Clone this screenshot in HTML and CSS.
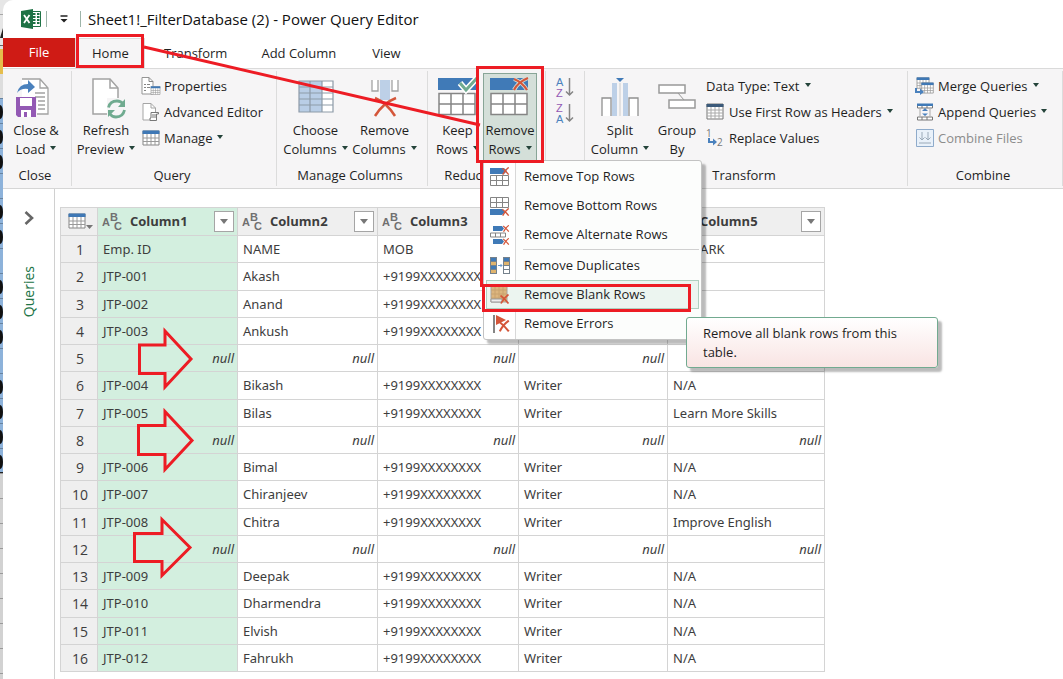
FILE: index.html
```html
<!DOCTYPE html>
<html lang="en">
<head>
<meta charset="utf-8">
<title>Sheet1!_FilterDatabase (2) - Power Query Editor</title>
<link rel="stylesheet" href="styles.css">
</head>
<body>
<svg class="defs" aria-hidden="true">
  <defs>
    <symbol id="x" viewBox="0 0 10 10"><path d="M1 1.500 Q5 4.500 9 9.500 M9 0.500 Q4 4 1.500 9.500" fill="none" stroke="#d4563a" stroke-width="1.700"/></symbol>
    <symbol id="grid" viewBox="0 0 38 24"><path d="M1 1.500H37V22.500H1Z" fill="#fff" stroke="#858585" stroke-width="1.500"/><path d="M1 12H37M13 1V23M25 1V23" stroke="#858585" stroke-width="1.500"/></symbol>
    <symbol id="table" viewBox="0 0 18 16"><path d="M1 1H17V15H1Z" fill="#fff" stroke="#858585"/><path d="M1 8H17M1 11.500H17M5 4V15M9 4V15M13 4V15" stroke="#9a9a9a"/><path d="M0.500 0.500H17.500V4H0.500Z" fill="#3f78b5"/></symbol>
    <symbol id="page" viewBox="0 0 28 38"><path d="M1 1H19L27 10V37H1Z" fill="#fff" stroke="#a3a3a3" stroke-width="1.500"/><path d="M19 1V10H27" fill="none" stroke="#a3a3a3" stroke-width="1.500"/></symbol>
    <symbol id="abc" viewBox="0 0 21 20"><text x="0" y="14">A</text><text x="8" y="9">B</text><text x="12" y="18">C</text></symbol>
  </defs>
</svg>
<div class="desktop">
  <div class="behind" aria-hidden="true">
    <svg width="12" height="679" viewBox="0 0 12 679"><path d="M0 38L3 28V38Z" fill="#222"/><path d="M0 105a3 7 0 0 1 0 14ZM0 130a3 7 0 0 1 0 14ZM0 155a3 7 0 0 1 0 14ZM0 205a3 7 0 0 1 0 14ZM0 230a3 7 0 0 1 0 14ZM0 280a3 7 0 0 1 0 14ZM0 305a3 7 0 0 1 0 14ZM0 330a3 7 0 0 1 0 14ZM0 380a3 7 0 0 1 0 14ZM0 405a3 7 0 0 1 0 14ZM0 430a3 7 0 0 1 0 14ZM0 455a3 7 0 0 1 0 14Z" fill="#111"/></svg>
  </div>
  <main class="window">
    <header class="titlebar">
      <svg class="excel" width="20" height="20" viewBox="0 0 20 20"><path d="M10 2.500H19.500V17.500H10Z" fill="#fff" stroke="#1e7245"/><path d="M12 5H14.500M16 5H18.500M12 8H14.500M16 8H18.500M12 11H14.500M16 11H18.500M12 14H14.500M16 14H18.500" stroke="#1e7245" stroke-width="1.800"/><path d="M0 2L12 0V20L0 18Z" fill="#1e7245"/><path d="M3 6L8.500 14M8.500 6L3 14" stroke="#fff" stroke-width="1.800"/></svg>
      <span class="rule"></span>
      <button class="quick" aria-label="Customize Quick Access Toolbar"><svg width="8" height="8" viewBox="0 0 8 8"><path d="M0.500 1H7.500" stroke="#222" stroke-width="1.500"/><path d="M0.500 4H7.500L4 7.500Z" fill="#222"/></svg></button>
      <span class="rule"></span>
      <h1>Sheet1!_FilterDatabase (2) - Power Query Editor</h1>
    </header>
    <nav class="tabs">
      <button class="tab file">File</button>
      <button class="tab home">Home</button>
      <button class="tab transform">Transform</button>
      <button class="tab add">Add Column</button>
      <button class="tab view">View</button>
    </nav>
    <section class="ribbon">
      <div class="group g-close">
        <div class="tools">
          <button class="big">
            <svg width="40" height="40" viewBox="0 0 40 40"><path d="M6 1H24L32 10V36H21V20H6Z" fill="#fff"/><path d="M6 1H24L32 10V36H21M24 1V10H32M19 15H29M19 19H29M22 23H29M22 27H29M22 31H29" fill="none" stroke="#a3a3a3" stroke-width="1.300"/><path d="M1 15Q3 6 12 6V2L19 9L12 15V11Q5 10 1 15Z" fill="#4a81bd"/><path d="M0 19H20V39H2L0 37Z" fill="#9359b4"/><path d="M4 20H16V28H4Z" fill="#fff"/><path d="M5 32H15V39H5Z" fill="#fff"/><path d="M8 34H11V39H8Z" fill="#9359b4"/></svg>
            <span>Close &amp;</span><span class="drop">Load</span>
          </button>
        </div>
        <h2>Close</h2>
      </div>
      <div class="group g-query">
        <div class="tools">
          <button class="big">
            <svg width="36" height="40" viewBox="-4 0 36 40"><path d="M1 1H18L26 10V36H1Z" fill="#fff" stroke="#a3a3a3" stroke-width="1.500"/><path d="M18 1V10H26" fill="none" stroke="#a3a3a3" stroke-width="1.500"/><path d="M15 20H32V40H15Z" fill="#f6f5f6"/><path d="M16.500 28.500Q18 22 25 22Q29 22 31 25M32.500 31Q31 38 24 38Q20 38 18 35" transform="translate(0 1)" fill="none" stroke="#70ab90" stroke-width="2.800"/><path d="M33 21V29H26ZM16 39V32H23Z" fill="#70ab90"/></svg>
            <span>Refresh</span><span class="drop">Preview</span>
          </button>
          <div class="stack">
            <button class="small"><svg width="20" height="18" viewBox="0 0 20 18"><path d="M1 0.500H8L12 4.500V17H1Z" fill="#fff" stroke="#959595"/><path d="M8 0.500V4.500H12M3 7.500H5M6 7.500H9M3 10.500H5M6 10.500H9M3 13.500H5" fill="none" stroke="#858585"/><use href="#table" x="9" y="9" width="11" height="9"/></svg>Properties</button>
            <button class="small"><svg width="20" height="18" viewBox="0 0 20 18"><path d="M2 0.500H10L14.500 5V17H2Z" fill="#fff" stroke="#a5a5a5"/><path d="M10 0.500V5H14.500" fill="none" stroke="#a5a5a5"/><path d="M10 9.500H17.500V11H15.500V17.500H9V15H10Z" fill="#fff" stroke="#777"/><path d="M11 12H15M11 14H15" stroke="#777"/></svg>Advanced Editor</button>
            <button class="small"><svg width="20" height="18" viewBox="0 0 20 18"><use href="#table" x="1" y="1" width="18" height="16"/></svg><span class="drop">Manage</span></button>
          </div>
        </div>
        <h2>Query</h2>
      </div>
      <div class="group g-columns">
        <div class="tools">
          <button class="big">
            <svg width="36" height="40" viewBox="0 0 36 40"><path d="M1 3H35V34H1Z" fill="#fff"/><path d="M1 3H24V34H1Z" fill="#b9cee6"/><path d="M1 3H35V34H1ZM12 3V34M24 3V34M1 9H35M1 15H35M1 21H35M1 27H35" fill="none" stroke="#8e9ba8" stroke-width="1.200"/></svg>
            <span>Choose</span><span class="drop">Columns</span>
          </button>
          <button class="big">
            <svg width="36" height="40" viewBox="0 0 36 40"><path d="M5 2V13H11V2M31 2V13H25V2" fill="#fff" stroke="#a3a3a3" stroke-width="1.300"/><path d="M13 2H23V22H13Z" fill="#bdd0e7"/><path d="M8 20Q20 25 28 38M29 20Q16 25 8 38" fill="none" stroke="#d4563a" stroke-width="2.500"/></svg>
            <span>Remove</span><span class="drop">Columns</span>
          </button>
        </div>
        <h2>Manage Columns</h2>
      </div>
      <div class="group g-reduce">
        <div class="tools">
          <button class="big keep">
            <svg width="40" height="40" viewBox="0 0 40 40"><path d="M0 0H38V12H0Z" fill="#407ab7"/><use href="#grid" x="0" y="14" width="38" height="24"/><path d="M22 5L28 12L39 0" fill="none" stroke="#fff" stroke-width="6"/><path d="M22 5L28 12L39 0" fill="none" stroke="#70ab90" stroke-width="3"/></svg>
            <span>Keep</span><span class="drop">Rows</span>
          </button>
          <div class="anchor">
            <button class="big pressed" aria-expanded="true">
              <svg width="40" height="40" viewBox="0 0 40 40"><path d="M0 0H38V12H0Z" fill="#407ab7"/><use href="#grid" x="0" y="14" width="38" height="24"/><path d="M24 1Q32 4 37 12M38 0Q28 4 24 12" fill="none" stroke="#d4dfd9" stroke-width="4"/><path d="M24 1Q32 4 37 12M38 0Q28 4 24 12" fill="none" stroke="#d4563a" stroke-width="2.200"/></svg>
              <span>Remove</span><span class="drop">Rows</span>
            </button>
            <div class="menu">
              <button><svg width="20" height="20" viewBox="0 0 20 20"><path d="M0 1H14L17 4L14 7H0Z" fill="#407ab7"/><path d="M0.500 8.500H18.500V18.500H0.500ZM0.500 13.500H18.500M6.500 8V18M12.500 8V18" fill="#fff" stroke="#858585"/><use href="#x" x="11" y="0" width="9" height="8"/></svg>Remove Top Rows</button>
              <button><svg width="20" height="20" viewBox="0 0 20 20"><path d="M0.500 1.500H18.500V11.500H0.500ZM0.500 6.500H18.500M6.500 1V11M12.500 1V11" fill="#fff" stroke="#858585"/><path d="M0 13H12L15 16L12 19H0Z" fill="#407ab7"/><use href="#x" x="11" y="12" width="9" height="8"/></svg>Remove Bottom Rows</button>
              <button><svg width="20" height="20" viewBox="0 0 20 20"><path d="M3 1H12L14 3.500L12 6H3ZM3 14H12L14 16.500L12 19H3Z" fill="#407ab7"/><path d="M0.500 8H15.500V12H0.500ZM5.500 8V12M10.500 8V12" fill="#fff" stroke="#858585"/><use href="#x" x="12" y="0" width="8" height="7"/><use href="#x" x="12" y="13" width="8" height="7"/></svg>Remove Alternate Rows</button>
              <hr>
              <button><svg width="20" height="20" viewBox="0 0 20 20"><path d="M0 1H7V18H0ZM13 1H20V18H13Z" fill="#75818c"/><path d="M1 2H6V5H1ZM1 10H6V13H1ZM14 2H19V5H14Z" fill="#407ab7"/><path d="M1 6H6V9H1ZM1 14H6V17H1ZM14 6H19V9H14Z" fill="#e0b46d"/><path d="M14 10H19V13H14ZM14 14H19V17H14Z" fill="#fff"/><path d="M8 9.500H12M10.500 8L12 9.500L10.500 11" fill="none" stroke="#6798cc"/></svg>Remove Duplicates</button>
              <button class="hover" aria-describedby="tip"><svg width="20" height="20" viewBox="0 0 20 20"><path d="M1 1H17V17H1Z" fill="#dcb57e" stroke="#a8a09a"/><path d="M1 5H17M1 9H17M1 13H17M5 1V17M9 1V17M13 1V17" stroke="#c8a26e"/><path d="M1 14H12V17H1Z" fill="#eee" stroke="#999"/><use href="#x" x="9" y="9" width="11" height="10"/></svg>Remove Blank Rows</button>
              <button><svg width="20" height="20" viewBox="0 0 20 20"><path d="M3 1H5V19H3Z" fill="#858585"/><path d="M6 1L16 6L6 11Z" fill="#d4563a"/><use href="#x" x="8" y="6" width="12" height="12"/></svg>Remove Errors</button>
              <div class="tip" id="tip" role="tooltip">Remove all blank rows from this table.</div>
            </div>
          </div>
        </div>
        <h2>Reduce Rows</h2>
      </div>
      <div class="group g-sort">
        <div class="tools stack">
          <button class="sort" aria-label="Sort ascending"><svg width="18" height="22" viewBox="0 0 18 22"><text x="0" y="10" fill="#4a81bd">A</text><text x="0" y="21" fill="#9359b4">Z</text><path d="M13.500 2V19M10 15.500L13.500 19L17 15.500" fill="none" stroke="#858585" stroke-width="1.500"/></svg></button>
          <button class="sort" aria-label="Sort descending"><svg width="18" height="22" viewBox="0 0 18 22"><text x="0" y="10" fill="#9359b4">Z</text><text x="0" y="21" fill="#4a81bd">A</text><path d="M13.500 2V19M10 15.500L13.500 19L17 15.500" fill="none" stroke="#858585" stroke-width="1.500"/></svg></button>
        </div>
      </div>
      <div class="group g-transform">
        <div class="tools">
          <button class="big">
            <svg width="38" height="40" viewBox="0 0 38 40"><path d="M1 38V20H10V38M37 38V20H28V38" fill="#fff" stroke="#909090" stroke-width="1.300"/><path d="M11 5H16V38H11ZM22 5H27V38H22Z" fill="#bdd0e7"/><path d="M19 5V38" stroke="#ccc"/><path d="M15 0H23L19 4Z" fill="#407ab7"/></svg>
            <span>Split</span><span class="drop">Column</span>
          </button>
          <button class="big">
            <svg width="38" height="40" viewBox="0 0 38 40"><path d="M20 15L26 22" stroke="#999"/><path d="M1 7H27V15H1ZM11 22H37V30H11Z" fill="#fff" stroke="#999" stroke-width="1.500"/></svg>
            <span>Group</span><span>By</span>
          </button>
          <div class="stack">
            <button class="small"><span class="drop">Data Type: Text</span></button>
            <button class="small"><svg width="18" height="18" viewBox="0 0 18 18"><path d="M1 1H17V16H1Z" fill="#fff" stroke="#777"/><path d="M1 7H17M1 10H17M1 13H17M5 4V16M9 4V16M13 4V16" stroke="#aaa"/><path d="M0.500 1H17.500V4H0.500Z" fill="#3c5a7a"/></svg><span class="drop">Use First Row as Headers</span></button>
            <button class="small"><svg width="18" height="18" viewBox="0 0 18 18"><text x="0" y="8" fill="#777">1</text><text x="11" y="17" fill="#777">2</text><path d="M3 9V13H8" fill="none" stroke="#4a81bd" stroke-width="2"/><path d="M7 9.500L11 13L7 16.500Z" fill="#4a81bd"/></svg>Replace Values</button>
          </div>
        </div>
        <h2>Transform</h2>
      </div>
      <div class="group g-combine">
        <div class="tools stack">
          <button class="small"><svg width="18" height="18" viewBox="0 0 18 18"><use href="#table" x="0" y="0" width="14" height="12"/><use href="#table" x="5" y="5" width="13" height="12"/><path d="M0 11V15H5" fill="none" stroke="#4a81bd" stroke-width="2"/><path d="M4 11.500L8 15L4 18Z" fill="#4a81bd"/></svg><span class="drop">Merge Queries</span></button>
          <button class="small"><svg width="18" height="18" viewBox="0 0 18 18"><path d="M1.500 1.500H16.500V5H1.500ZM1.500 14H16.500V17H1.500ZM6 2V5M11 2V5M6 14V17M11 14V17" fill="#fff" stroke="#777"/><path d="M1 0.500H17V3H1Z" fill="#407ab7"/><path d="M9 5L12 8H6ZM9 13L12 10.500H6Z" fill="#4a81bd"/><path d="M4 6V13M14 6V13" stroke="#aaa"/></svg><span class="drop">Append Queries</span></button>
          <button class="small" disabled><svg width="18" height="18" viewBox="0 0 18 18"><path d="M0.500 0.500H17.500V17.500H0.500Z" fill="#e9f1fa" stroke="#8fabcb"/><path d="M6 3V11M3.500 8.500L6 11L8.500 8.500M12 3V11M9.500 8.500L12 11L14.500 8.500M3 14H15" fill="none" stroke="#9aa9b8"/></svg>Combine Files</button>
        </div>
        <h2>Combine</h2>
      </div>
    </section>
    <div class="content">
      <aside class="queries">
        <button aria-label="Expand Queries pane"><svg width="10" height="14" viewBox="0 0 10 14"><path d="M1.500 1L8 7L1.500 13" fill="none" stroke="#666" stroke-width="2.600"/></svg></button>
        <span>Queries</span>
      </aside>
      <div class="preview">
        <table>
          <colgroup><col class="c0"><col class="c1"><col class="c2"><col class="c3"><col class="c4"><col class="c5"></colgroup>
          <thead><tr>
            <th><button class="corner" aria-label="Table options"><svg width="26" height="18" viewBox="0 0 26 18"><use href="#table" x="0" y="0" width="18" height="16"/><path d="M18 12H25L21.500 16Z" fill="#777"/></svg></button></th>
            <th class="sel"><div><svg class="abc" width="21" height="20"><use href="#abc"/></svg>Column1<button aria-label="Filter Column1"></button></div></th>
            <th><div><svg class="abc" width="21" height="20"><use href="#abc"/></svg>Column2<button aria-label="Filter Column2"></button></div></th>
            <th><div><svg class="abc" width="21" height="20"><use href="#abc"/></svg>Column3<button aria-label="Filter Column3"></button></div></th>
            <th><div><svg class="abc" width="21" height="20"><use href="#abc"/></svg>Column4<button aria-label="Filter Column4"></button></div></th>
            <th><div><svg class="abc" width="21" height="20"><use href="#abc"/></svg>Column5<button aria-label="Filter Column5"></button></div></th>
          </tr></thead>
          <tbody>
            <tr><th>1</th><td>Emp. ID</td><td>NAME</td><td>MOB</td><td></td><td>REMARK</td></tr>
            <tr><th>2</th><td>JTP-001</td><td>Akash</td><td>+9199XXXXXXXX</td><td></td><td></td></tr>
            <tr><th>3</th><td>JTP-002</td><td>Anand</td><td>+9199XXXXXXXX</td><td></td><td></td></tr>
            <tr><th>4</th><td>JTP-003</td><td>Ankush</td><td>+9199XXXXXXXX</td><td></td><td></td></tr>
            <tr class="null"><th>5</th><td>null</td><td>null</td><td>null</td><td>null</td><td></td></tr>
            <tr><th>6</th><td>JTP-004</td><td>Bikash</td><td>+9199XXXXXXXX</td><td>Writer</td><td>N/A</td></tr>
            <tr><th>7</th><td>JTP-005</td><td>Bilas</td><td>+9199XXXXXXXX</td><td>Writer</td><td>Learn More Skills</td></tr>
            <tr class="null"><th>8</th><td>null</td><td>null</td><td>null</td><td>null</td><td>null</td></tr>
            <tr><th>9</th><td>JTP-006</td><td>Bimal</td><td>+9199XXXXXXXX</td><td>Writer</td><td>N/A</td></tr>
            <tr><th>10</th><td>JTP-007</td><td>Chiranjeev</td><td>+9199XXXXXXXX</td><td>Writer</td><td>N/A</td></tr>
            <tr><th>11</th><td>JTP-008</td><td>Chitra</td><td>+9199XXXXXXXX</td><td>Writer</td><td>Improve English</td></tr>
            <tr class="null"><th>12</th><td>null</td><td>null</td><td>null</td><td>null</td><td>null</td></tr>
            <tr><th>13</th><td>JTP-009</td><td>Deepak</td><td>+9199XXXXXXXX</td><td>Writer</td><td>N/A</td></tr>
            <tr><th>14</th><td>JTP-010</td><td>Dharmendra</td><td>+9199XXXXXXXX</td><td>Writer</td><td>N/A</td></tr>
            <tr><th>15</th><td>JTP-011</td><td>Elvish</td><td>+9199XXXXXXXX</td><td>Writer</td><td>N/A</td></tr>
            <tr><th>16</th><td>JTP-012</td><td>Fahrukh</td><td>+9199XXXXXXXX</td><td>Writer</td><td>N/A</td></tr>
          </tbody>
        </table>
      </div>
    </div>
  </main>
</div>
<svg class="marks" width="1063" height="679" viewBox="0 0 1063 679" aria-hidden="true">
  <path d="M77.500 35.500H142.500V66.500H77.500ZM144 47L480 125M477.500 67.500H542.500V161.500H477.500ZM481.500 162V287M483.500 285.500H689.500V310.500H483.500Z"/>
  <path d="M139.500 345H165V331L191 359L165 387V373.500H139.500ZM138.500 425.500H165V411.500L192 440.500L165 469.500V454.500H138.500ZM134.500 533.500H162V519.500L190 547.500L162 575.500V561.500H134.500Z"/>
</svg>
</body>
</html>
```
FILE: styles.css
```css
* { box-sizing: border-box; }
body { margin: 0; background: #e6e6e6; color: #1f1f1f; font: 13px/19px "Open Sans", "Noto Sans", sans-serif; overflow: hidden; }
button { font: inherit; color: inherit; background: none; border: 0; padding: 0; margin: 0; }
svg { flex: none; display: block; overflow: visible; }
.defs { position: absolute; width: 0; height: 0; }
.desktop { display: flex; min-height: 100vh; }
.behind { width: 12px; margin-right: -9px; flex: none;
  background:
    linear-gradient(#e6e6e6 0 14px, #a8a8a8 14px 15px, #e6e6e6 15px 45px, #666 45px 46px, #e0e0e0 46px 49px, #e5bd4c 49px 74px, #ddd 74px 98px, transparent 98px 472px, #222 472px 473px, transparent 473px),
    repeating-linear-gradient(transparent 0 23px, #0004 23px 24px, transparent 24px 25px),
    linear-gradient(#8db2da 472px, #d2d2d2 472px); }
.window { flex: 1; min-width: 0; background: #fff; border-top-left-radius: 10px; display: flex; flex-direction: column; position: relative; }
.titlebar { height: 38px; display: flex; align-items: center; padding-left: 18px; }
.titlebar h1 { margin: 0 0 0 7px; font-size: 15px; line-height: 20px; font-weight: 400; color: #111; }
.excel { margin-right: 5px; }
.rule { width: 1px; height: 16px; background: #9db5aa; }
.quick { width: 33px; display: flex; justify-content: center; }
.tabs { display: flex; height: 30px; }
.tab { padding: 0 16px; }
.file { background: #cf1b15; color: #fff; width: 72px; height: 29px; }
.home { background: #f6f5f6; border: 1px solid #dcdcdc; border-bottom: 0; width: 70px; }
.tab.transform { padding-left: 19px; }
.tab.add { padding-left: 18px; }
.tab.view { padding-left: 20px; }
.ribbon { display: flex; height: 121px; background: #f6f5f6; border-top: 1px solid #dadada; border-bottom: 1px solid #d6d6d6; padding: 2px 0; }
.group { flex: none; display: flex; flex-direction: column; border-right: 1px solid #dcdcdc; }
.group h2 { margin: auto 0 0; font-size: 13px; line-height: 20px; font-weight: 400; text-align: center; padding: 0 4px 1px 0; white-space: nowrap; }
.tools { display: flex; height: 90px; }
.g-close { width: 69px; }
.g-query { width: 205px; }
.g-columns { width: 151px; }
.g-reduce { width: 118px; }
.g-sort { width: 39px; }
.g-transform { width: 323px; }
.g-combine { width: 155px; }
.big { flex: none; display: flex; flex-direction: column; align-items: center; padding-top: 7px; width: 68px; white-space: nowrap; }
.big svg { margin-bottom: 3px; }
.g-close .big { width: 66px; }
.g-query .stack { padding-left: 1px; }
.g-columns .tools { padding-left: 4px; }
.g-columns .big { width: 69px; }
.drop::after { content: ""; display: inline-block; border: 3px solid transparent; border-top: 4px solid #24433a; border-bottom: 0; margin-left: 5px; vertical-align: 4px; }
.stack { display: flex; flex-direction: column; padding-top: 2px; }
.small { display: flex; align-items: center; gap: 3px; height: 26px; white-space: nowrap; }
.small:disabled { color: #8c8c8c; }
.small text { font: 10px "Open Sans", sans-serif; }
.sort text { font: 11px "Liberation Sans", sans-serif; stroke: currentColor; stroke-width: 0; }
.keep { width: 55px; padding-left: 4px; }
.anchor { position: relative; }
.pressed { width: 54px; height: 88px; margin-top: 2px; padding-top: 4px; background: #d4dfd9; border: 1px solid #88a597; }
.g-sort .tools { align-items: center; padding-top: 5px; gap: 4px; }
.g-transform .big:nth-child(1) { width: 70px; }
.g-transform .big:nth-child(2) { width: 44px; }
.g-transform .tools > .stack { margin-left: 7px; }
.g-transform .small { gap: 5px; }
.g-combine .tools { padding-left: 8px; }
.g-combine .small { gap: 4px; }
.menu { position: absolute; z-index: 2; top: 89px; left: 0; width: 219px; padding: 1px 2px; border: 1px solid #c3c3c3; border-radius: 3px; background: linear-gradient(90deg, #fff 31px, #d8d8d8 31px 32px, #fcfdfc 32px); box-shadow: 4px 4px 2px #0004; }
.menu button { display: flex; align-items: center; gap: 14px; width: 100%; height: 29px; padding-left: 3px; border: 1px solid transparent; white-space: nowrap; }
.menu hr { margin: 0 0 1px 37px; border: 0; border-top: 1px solid #d0d0d0; }
.menu .hover { background: #ecf5f0; border-color: #afd0c0; }
.tip { position: absolute; z-index: 3; left: 202px; top: 156px; width: 252px; padding: 6px 16px 5px; border: 1px solid #72aa90; border-radius: 3px; background: linear-gradient(#fff, #f9e4e3); box-shadow: 4px 4px 2px #0004; }
.content { display: flex; flex: 1; }
.queries { width: 52px; flex: none; border-right: 1px solid #d0d0d0; display: flex; flex-direction: column; align-items: center; padding-top: 22px; }
.queries span { writing-mode: vertical-rl; transform: rotate(180deg); margin-top: 41px; font-size: 14px; color: #217346; }
.preview { padding: 18px 5px 0; }
table { border-collapse: collapse; table-layout: fixed; width: 765px; color: #3d3d3d; }
.c0 { width: 37px; } .c1, .c2 { width: 140px; } .c3 { width: 141px; } .c4 { width: 149px; } .c5 { width: 157px; }
th, td { border: 1px solid #d4d4d4; padding: 0 3px 0 5px; height: 27px; text-align: left; line-height: 19px; }
td { font-family: "Noto Sans", sans-serif; }
tbody tr:nth-child(4n+2) > * { height: 28px; }
th { background: #efefef; font-weight: 400; }
tbody th { text-align: center; font-size: 14px; }
thead th { height: 28px; font-weight: 700; padding: 0 3px 0 4px; }
thead div { display: flex; align-items: center; }
thead .abc { margin-right: 7px; font: 700 11px "Liberation Sans", sans-serif; fill: #707070; }
thead div button { margin-left: auto; width: 20px; height: 21px; background: #fff; border: 1px solid #a5a5a5; display: grid; place-items: center; }
thead div button::after { content: ""; border: 4px solid transparent; border-top: 5px solid #777; border-bottom: 0; }
.corner { padding-left: 3px; display: block; }
.sel, td:nth-child(2) { background: #d3efdf; }
.null td { text-align: right; font-style: italic; }
.marks { position: absolute; inset: 0 auto auto 0; z-index: 5; pointer-events: none; }
.marks path { fill: none; stroke: #ed1c24; stroke-width: 3; }
```
